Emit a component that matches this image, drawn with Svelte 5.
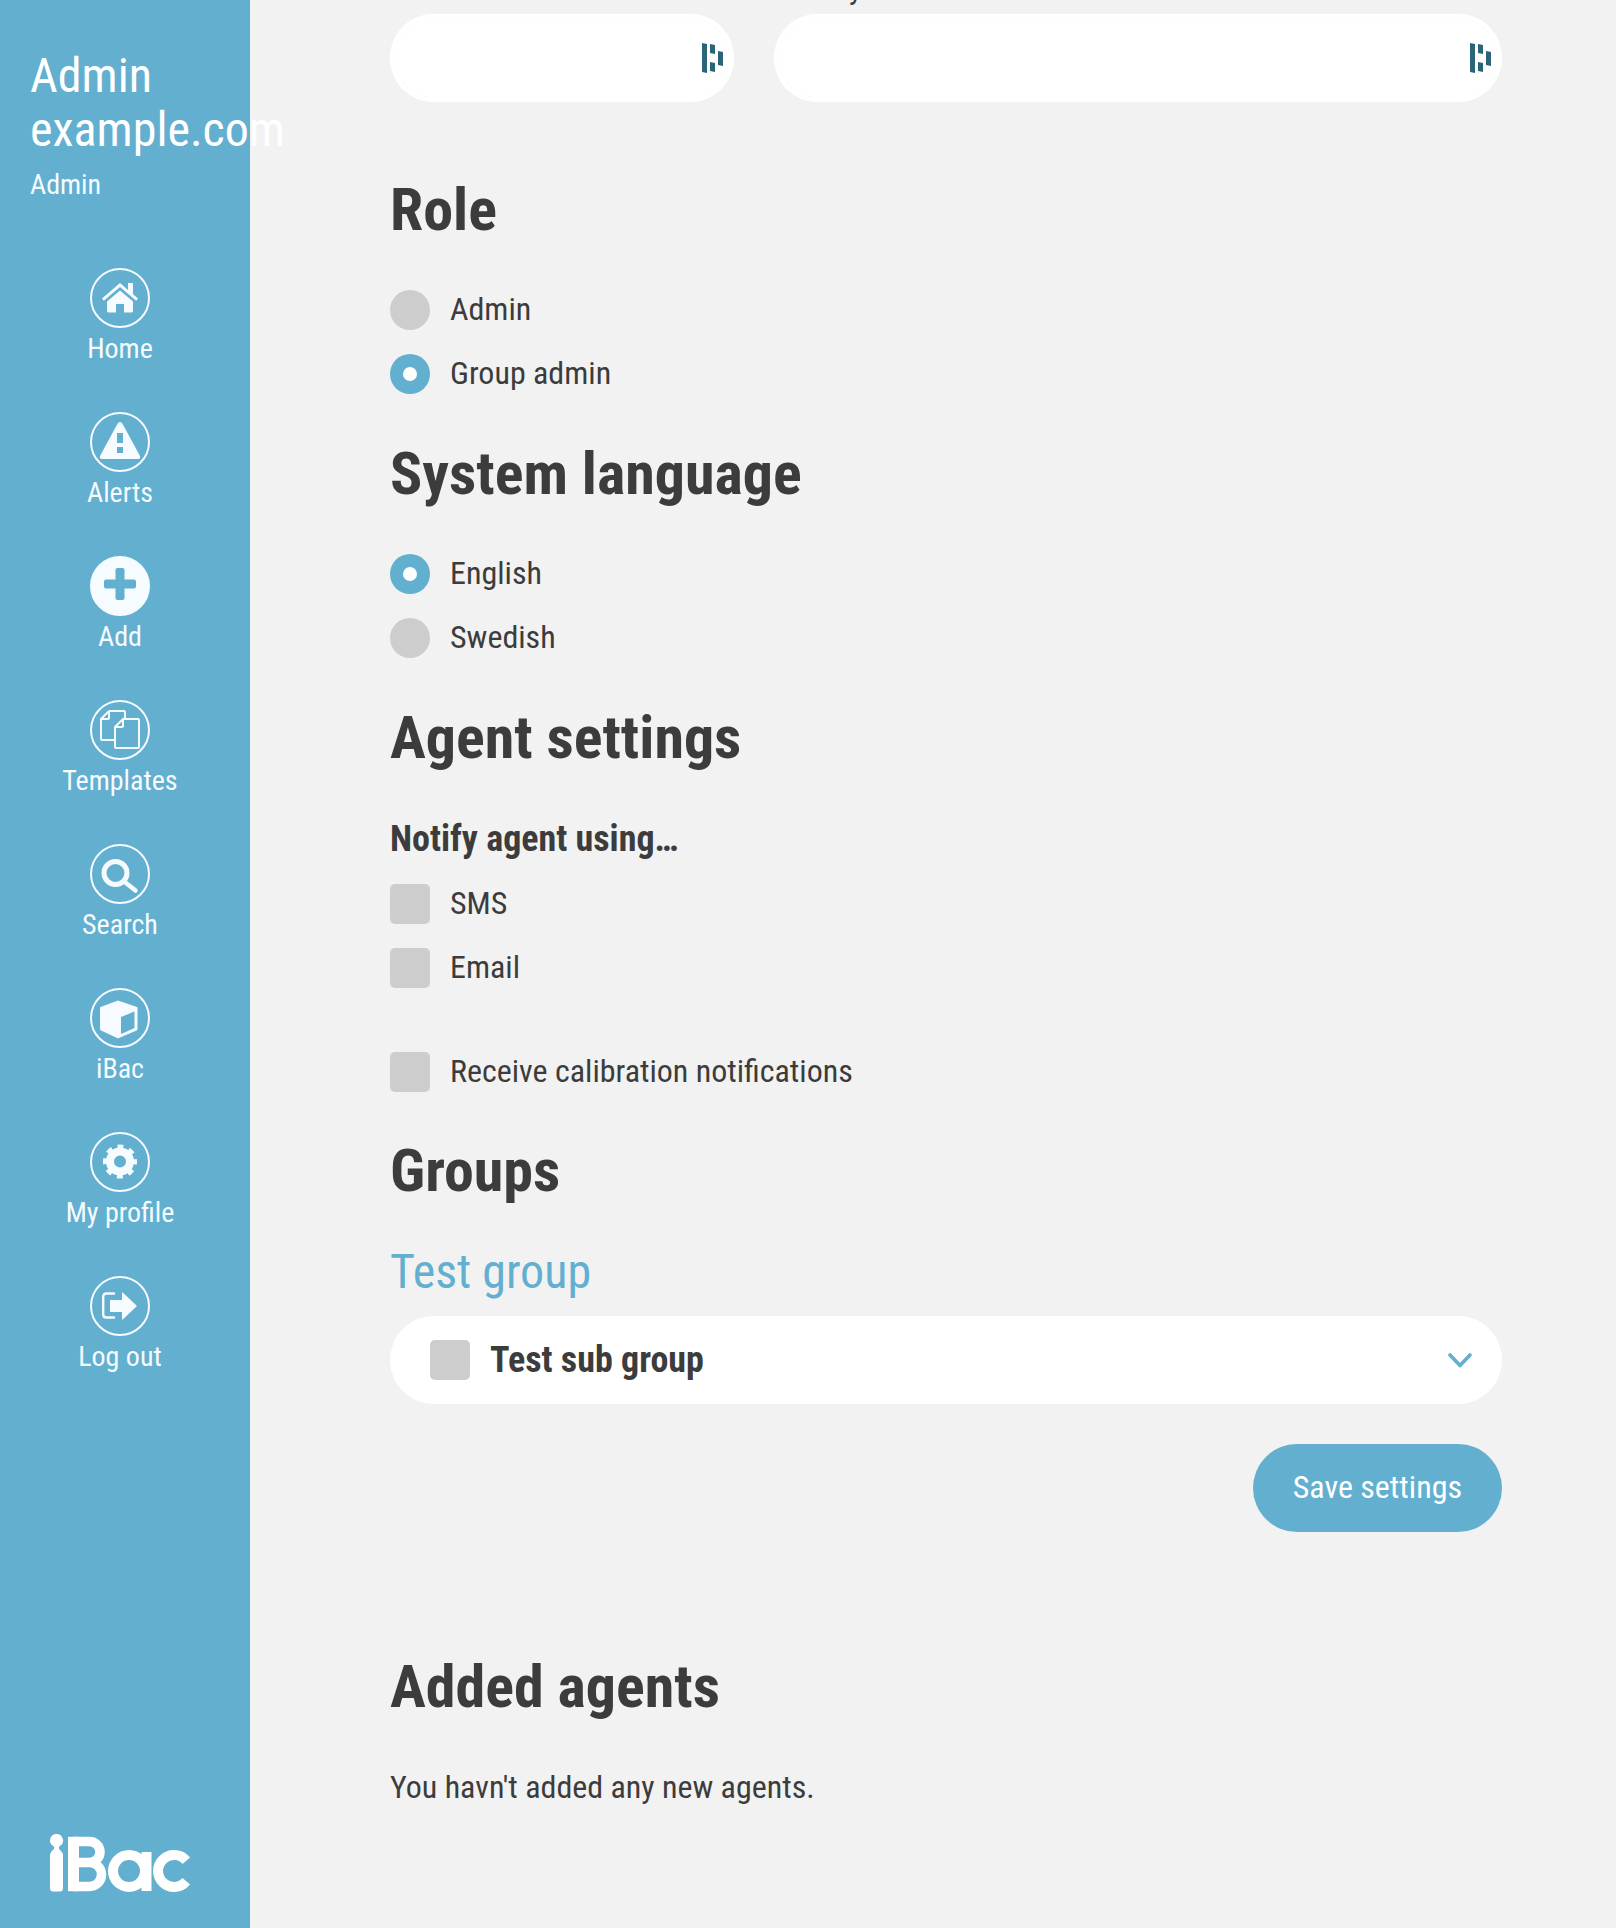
<script>
	const navItems = [
		{ label: 'Home', icon: 'home' },
		{ label: 'Alerts', icon: 'alert' },
		{ label: 'Add', icon: 'add', solid: true },
		{ label: 'Templates', icon: 'templates' },
		{ label: 'Search', icon: 'search' },
		{ label: 'iBac', icon: 'box' },
		{ label: 'My profile', icon: 'gear' },
		{ label: 'Log out', icon: 'logout' },
	];
</script>

<div class="layout">
	<aside class="sidebar">
		<div class="user">
			<div class="user-name">Admin<br />example.com</div>
			<div class="user-role">Admin</div>
		</div>
		<nav class="nav">
			{#each navItems as item}
				<a class="nav-item" href="#top">
					<span class="nav-icon" class:solid={item.solid}>
						<svg viewBox="0 0 60 60" width="60" height="60" aria-hidden="true">
							{#if item.icon === 'home'}
								<path fill="#f5fbfe" d="M30 15 12 30.500l1.800 2.200L30 19l16.200 13.700 1.800-2.200-5-4.300V15h-5v7z" />
								<path fill="#f5fbfe" d="M30 22.500 17 33.500V43q0 1.500 1.500 1.500H26V36h8v8.500h7.500Q43 44.500 43 43v-9.500z" />
							{:else if item.icon === 'alert'}
								<path fill="#f5fbfe" fill-rule="evenodd" d="M30 10q1.500 0 2.500 1.700L50 44q1 3-2 3H12q-3 0-2-3l17.500-32.300Q28.500 10 30 10zm-3 11v10h6V21zm0 14v6h6v-6z" />
							{:else if item.icon === 'add'}
								<path fill="#62afd0" d="M27.500 12h5q2 0 2 2v9.500H44q2 0 2 2v5q0 2-2 2h-9.500V42q0 2-2 2h-5q-2 0-2-2v-9.500H16q-2 0-2-2v-5q0-2 2-2h9.500V14q0-2 2-2z" />
							{:else if item.icon === 'templates'}
								<g fill="none" stroke="#f5fbfe" stroke-width="2" stroke-linejoin="round">
									<path d="M19 11h15q1 0 1 1v6M24 40H12q-1 0-1-1V19L19 11" />
									<path d="M11 19h7q1 0 1-1v-7" />
									<path d="M33 19h15q1 0 1 1v27q0 1-1 1H26q-1 0-1-1V27z" />
									<path d="M25 27h7q1 0 1-1v-7" />
								</g>
							{:else if item.icon === 'search'}
								<circle cx="25.500" cy="29" r="11.500" fill="none" stroke="#f5fbfe" stroke-width="5" />
								<path d="M36 39l9.500 7.500" stroke="#f5fbfe" stroke-width="4.500" stroke-linecap="round" />
							{:else if item.icon === 'box'}
								<path fill="#f5fbfe" fill-rule="evenodd" d="M28 12.500 47 19q.5.200.5 1v21q0 1-1 1.500L29 50q-1 .5-2 0L11 42.500q-1-.5-1-1.500V20q0-.800.5-1zM44.500 23.500 31 29v17l13.500-6z" />
							{:else if item.icon === 'gear'}
								<circle cx="30" cy="29.500" r="10" fill="none" stroke="#f5fbfe" stroke-width="8" />
								<circle cx="30" cy="29.500" r="15" fill="none" stroke="#f5fbfe" stroke-width="4" stroke-dasharray="5.890 5.890" stroke-dashoffset="2.945" />
							{:else if item.icon === 'logout'}
								<path fill="none" stroke="#f5fbfe" stroke-width="2.400" stroke-linecap="round" d="M24 17.500h-7.500q-3.300 0-3.300 3.300v17.400q0 3.300 3.300 3.300H24" />
								<path fill="#f5fbfe" d="M32 17q0-1 1-.3L47 30 33 43.300q-1 .7-1-.3V36H20V24h12z" />
							{/if}
						</svg>
					</span>
					<span class="nav-label">{item.label}</span>
				</a>
			{/each}
		</nav>
		<svg class="logo" viewBox="0 0 142 60" width="142" height="60" aria-label="iBac">
			<path fill="#fff" d="M6.500 0a6.500 6.500 0 0 1 3.500 12q-1.500 1-1 2.500t2.500 3q1.500 1.500 1.500 4V54q0 3.500-3 3.500H3q-3 0-3-3.500V21.500q0-2.500 1.500-4t2.500-3-1-2.500A6.500 6.500 0 0 1 6.500 0z" />
			<g fill="none" stroke="#fff" stroke-width="10">
				<path d="M23.500 7.500h16a10.500 10.500 0 0 1 0 21h-16M39.500 28.500a12 12 0 0 1 0 24h-16" stroke-width="9.500" />
				<path d="M23.500 2.800v54.400" stroke-width="11" />
				<circle cx="79" cy="37" r="16" />
				<path d="M96.500 18v39" />
				<path d="M136.300 26.700a16 16 0 1 0 0 20.600" />
			</g>
		</svg>
	</aside>

	<main class="main">
		<div class="address-row">
			<label class="field small">
				<span class="field-label">Postal code</span>
				<span class="input">
					<svg viewBox="0 0 21 30" width="21" height="30" aria-hidden="true">
						<path fill="#2b6478" d="M0 0l5 1v29l-5-1zM8 1l5 1v9l-5-1zM8 19l5 1v9l-5-1zM16 8l5 1v14l-5-1z" />
					</svg>
				</span>
			</label>
			<label class="field large">
				<span class="field-label">City</span>
				<span class="input">
					<svg viewBox="0 0 21 30" width="21" height="30" aria-hidden="true">
						<path fill="#2b6478" d="M0 0l5 1v29l-5-1zM8 1l5 1v9l-5-1zM8 19l5 1v9l-5-1zM16 8l5 1v14l-5-1z" />
					</svg>
				</span>
			</label>
		</div>

		<h2 class="role-title">Role</h2>
		<div class="options">
			<div class="option"><span class="radio"></span>Admin</div>
			<div class="option"><span class="radio checked"></span>Group admin</div>
		</div>

		<h2>System language</h2>
		<div class="options">
			<div class="option"><span class="radio checked"></span>English</div>
			<div class="option"><span class="radio"></span>Swedish</div>
		</div>

		<h2>Agent settings</h2>
		<div class="notify-label">Notify agent using…</div>
		<div class="options notify">
			<div class="option"><span class="check"></span>SMS</div>
			<div class="option"><span class="check"></span>Email</div>
		</div>
		<div class="option calibration"><span class="check"></span>Receive calibration notifications</div>

		<h2>Groups</h2>
		<h3 class="group-name">Test group</h3>
		<div class="group-row">
			<span class="check"></span>
			<span class="group-label">Test sub group</span>
			<svg viewBox="0 0 24 15" width="24" height="15" aria-hidden="true">
				<path d="m2 2 10 10.500L22 2" fill="none" stroke="#62afd0" stroke-width="3.600" stroke-linecap="round" stroke-linejoin="round" />
			</svg>
		</div>
		<div class="actions">
			<button class="save" type="button">Save settings</button>
		</div>

		<h2 class="added-title">Added agents</h2>
		<p class="empty">You havn't added any new agents.</p>
	</main>
</div>

<style>
	:global(body) {
		background: #f2f2f2;
	}

	.layout {
		display: flex;
		height: 1928px;
		overflow: hidden;
		font-family: Roboto, "Liberation Sans", sans-serif;
		font-stretch: 75%;
		color: #3c3c3c;
	}

	.sidebar {
		position: relative;
		display: flex;
		flex-direction: column;
		flex: 0 0 250px;
		min-width: 0;
		box-sizing: border-box;
		padding-top: 49px;
		background: #62afd0;
		color: #f5fbfe;
	}

	.user {
		padding-left: 30px;
		white-space: nowrap;
	}

	.user-name {
		font-size: 48px;
		line-height: 54px;
		color: #fff;
	}

	.user-role {
		margin-top: 12px;
		font-size: 28px;
		line-height: 32px;
	}

	.nav {
		display: flex;
		flex-direction: column;
		align-items: center;
		margin-top: 67px;
		padding-right: 10px;
	}

	.nav-item {
		display: flex;
		flex-direction: column;
		align-items: center;
		height: 144px;
		color: inherit;
		text-decoration: none;
	}

	.nav-icon {
		display: block;
		box-sizing: border-box;
		width: 60px;
		height: 60px;
		border: 2px solid #f5fbfe;
		border-radius: 50%;
	}

	.nav-icon svg {
		display: block;
		margin: -2px;
	}

	.nav-icon.solid {
		background: #f5fbfe;
	}

	.nav-label {
		margin-top: 4px;
		font-size: 28px;
		line-height: 34px;
	}

	.logo {
		position: absolute;
		left: 50px;
		bottom: 34px;
	}

	.main {
		flex: 1;
		min-width: 0;
		padding: 14px 114px 0 140px;
	}

	.address-row {
		display: flex;
		gap: 40px;
	}

	.field {
		position: relative;
		display: block;
	}

	.field.small {
		flex: 0 0 344px;
	}

	.field.large {
		flex: 1;
	}

	.field-label {
		position: absolute;
		left: 40px;
		bottom: 100%;
		margin-bottom: 9px;
		font-size: 32px;
		line-height: 34px;
		white-space: nowrap;
	}

	.input {
		display: flex;
		align-items: center;
		justify-content: flex-end;
		height: 88px;
		padding-right: 11px;
		border-radius: 44px;
		background: #fff;
		box-shadow: inset 0 0 0 4px #fff, inset 0 0 0 5px #fdfdfd;
	}

	h2 {
		margin: 0;
		font-size: 60px;
		line-height: 68px;
		font-weight: 700;
	}

	.role-title {
		margin-top: 74px;
	}

	.options {
		display: flex;
		flex-direction: column;
		gap: 24px;
		margin-top: 46px;
		margin-bottom: 46px;
	}

	.option {
		display: flex;
		align-items: flex-start;
		gap: 20px;
		height: 40px;
		font-size: 32px;
		line-height: 38px;
	}

	.radio,
	.check {
		flex: 0 0 40px;
		height: 40px;
		box-sizing: border-box;
		background: #cdcdcd;
		border-radius: 5px;
	}

	.radio {
		border-radius: 50%;
	}

	.radio.checked {
		background: #62afd0;
		padding: 13px;
	}

	.radio.checked::after {
		content: "";
		display: block;
		width: 14px;
		height: 14px;
		border-radius: 50%;
		background: #fff;
	}

	.notify-label {
		margin-top: 47px;
		font-size: 36px;
		line-height: 40px;
		font-weight: 700;
	}

	.options.notify {
		margin-top: 25px;
		margin-bottom: 64px;
	}

	.calibration {
		margin-bottom: 45px;
	}

	.group-name {
		margin: 39px 0 0;
		font-size: 48px;
		line-height: 56px;
		font-weight: 400;
		color: #62afd0;
	}

	.group-row {
		display: flex;
		align-items: center;
		gap: 20px;
		height: 88px;
		margin-top: 16px;
		padding: 0 30px 0 40px;
		border-radius: 44px;
		background: #fff;
	}

	.group-label {
		flex: 1;
		font-size: 36px;
		font-weight: 700;
	}

	.actions {
		display: flex;
		justify-content: flex-end;
		margin-top: 40px;
	}

	.save {
		height: 88px;
		padding: 0 40px 2px;
		border: 0;
		border-radius: 44px;
		background: #62afd0;
		color: #fff;
		font-family: inherit;
		font-stretch: inherit;
		font-size: 32px;
	}

	.added-title {
		margin-top: 121px;
	}

	.empty {
		margin: 46px 0 0;
		font-size: 32px;
		line-height: 40px;
	}
</style>
